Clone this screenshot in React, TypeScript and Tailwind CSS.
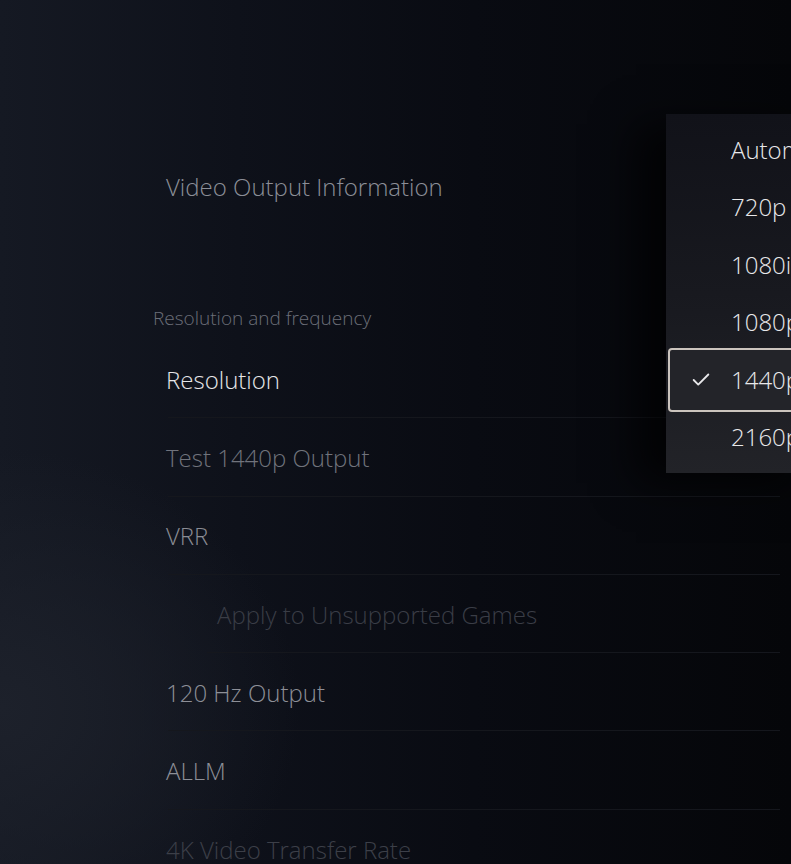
import { Check } from 'lucide-react';

type Row = {
  label: string;
  tone: string;
  indent?: boolean;
  divider?: boolean;
};

const rows: Row[] = [
  { label: 'Resolution', tone: 'text-[#e6e6e8]', divider: true },
  { label: 'Test 1440p Output', tone: 'text-[#70737c]', divider: true },
  { label: 'VRR', tone: 'text-[#8a8c94]', divider: true },
  { label: 'Apply to Unsupported Games', tone: 'text-[#3a3d46]', indent: true, divider: true },
  { label: '120 Hz Output', tone: 'text-[#8d8f97]', divider: true },
  { label: 'ALLM', tone: 'text-[#8d8f97]', divider: true },
  { label: '4K Video Transfer Rate', tone: 'text-[#3c3f48]' },
];

const options = ['Automatic', '720p', '1080i', '1080p', '1440p', '2160p'];
const selected = '1440p';

function SettingRow({ row }: { row: Row }) {
  return (
    <div className={`flex h-[78.3px] flex-col ${row.indent ? 'pl-[51px]' : ''}`}>
      <div className={`flex flex-1 items-center pt-[2px] text-[24px] font-light ${row.tone}`}>
        {row.label}
      </div>
      {row.divider && <div className={`h-[1px] bg-[#15171d] ${row.indent ? 'ml-[-10px]' : 'ml-[2px]'}`} />}
    </div>
  );
}

/**
 * Resolution picker - dropdown that floats over the settings list
 */
function ResolutionMenu() {
  return (
    <div className="absolute left-[666px] top-[114px] w-[160px] overflow-hidden bg-[linear-gradient(180deg,#111219_0%,#18191f_50%,#222328_100%)] shadow-[-30px_10px_40px_rgba(0,0,0,0.7)]">
      <div className="flex flex-col py-[7px]">
        {options.map((opt) => {
          const active = opt === selected;
          return (
            <div
              key={opt}
              className={`flex items-center whitespace-nowrap ${
                active
                  ? 'relative z-10 my-[-3.25px] ml-[2px] h-[64px] rounded-[4px] border-2 border-[#cbc4bd] bg-[#232429] pl-[20px]'
                  : 'h-[57.5px] pl-[65px]'
              }`}
            >
              {active && <Check className="mr-[19px] h-[22px] w-[22px] text-[#e8e8ea]" strokeWidth={2} />}
              <span className="text-[24px] font-light text-[#e8e8ea]">{opt}</span>
            </div>
          );
        })}
      </div>
    </div>
  );
}

export default function App() {
  return (
    <div
      className="relative h-[864px] w-[791px] overflow-hidden bg-[radial-gradient(ellipse_300px_260px_at_0%_82%,#1d212b_0%,rgba(20,23,31,0)_100%),linear-gradient(90deg,#151923_0%,#0e111a_30%,#090b12_60%,#050609_100%)]"
      style={{ fontFamily: '"Open Sans", "Noto Sans", sans-serif' }}
    >
      <div className="flex w-[780px] flex-col pl-[166px] pt-[148px]">
        <div className="flex h-[78px] items-center text-[24px] font-light text-[#8b8e97]">
          Video Output Information
        </div>
        <div className="ml-[-13px] mt-[80px] flex h-[24px] items-center text-[19px] font-light text-[#6b6e78]">
          Resolution and frequency
        </div>
        <div className="mt-[10px] flex flex-col">
          {rows.map((r) => (
            <SettingRow key={r.label} row={r} />
          ))}
        </div>
      </div>
      <ResolutionMenu />
    </div>
  );
}
